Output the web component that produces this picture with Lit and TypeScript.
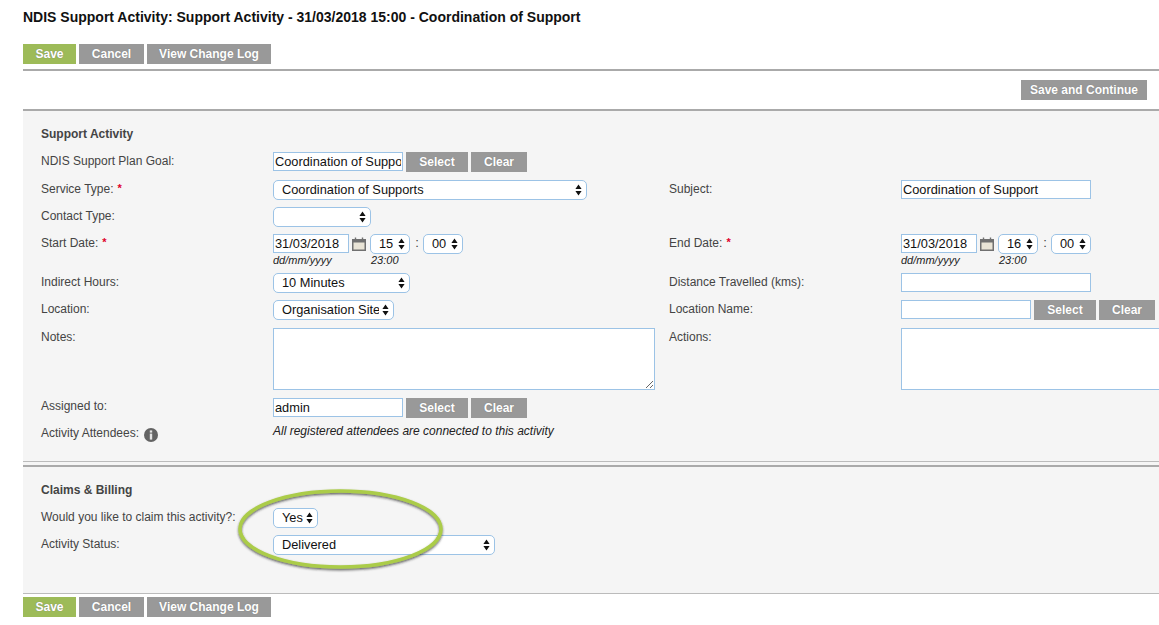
import { LitElement, html, css, svg } from "lit";
import { customElement } from "lit/decorators.js";

const FONT = css`"Liberation Sans", Arial, sans-serif`;

@customElement("app-root")
export class AppRoot extends LitElement {
  static styles = css`
    :host { display: block; width: 1159px; height: 625px; overflow: hidden; position: relative; background: #fff; font-family: ${FONT}; font-size: 12px; color: #444; }
    * { box-sizing: border-box; }
    .page { padding: 0 0 0 23px; }
    h1 { margin: 0; padding-top: 9px; height: 44px; font-size: 14px; line-height: 16px; font-weight: bold; color: #111; }
    .btns { display: flex; gap: 3px; height: 20px; }
    .btn { border: 0; margin: 0; padding: 0; height: 20px; background: #999; color: #fff; font: bold 12px/20px ${FONT}; text-shadow: 0 0 1px #777; display: block; }
    .btn.go { background: #9dbb58; }
    .w-save { width: 53px; } .w-cancel { width: 65px; } .w-log { width: 124px; } .w-select { width: 62px; } .w-clear { width: 56px; } .w-cont { width: 126px; }
    .top-rule { height: 2px; background: #aaa; margin-top: 5px; }
    .cont { display: flex; justify-content: flex-end; padding: 9px 12px 9px 0; }
    .panel { background: #f5f5f5; border-top: 2px solid #aaa; padding-left: 18px; }
    .p1 { height: 353px; border-bottom: 1px solid #bbb; }
    .gap { height: 3px; background: #f5f5f5; }
    .p2 { height: 129px; border-bottom: 1px solid #bbb; }
    h2 { margin: 0; padding-top: 15px; height: 41px; font-size: 12px; line-height: 16px; font-weight: bold; color: #444; }
    .form { display: grid; grid-template-columns: 232px 396px 232px 258px; }
    .f1 { grid-template-rows: 28px 27px 27px 39px 27px 28px 70px 26px 20px; }
    .f2 { grid-template-rows: 27px 27px; }
    .label { line-height: 16px; padding-top: 1px; white-space: nowrap; display: flex; gap: 4px; align-items: flex-start; }
    .label.tight { padding-top: 0; }
    .label.wide { gap: 5px; }
    .req { color: #e0002b; font-size: 11px; line-height: 14px; font-weight: bold; }
    .field { display: flex; align-items: flex-start; gap: 3px; }
    input, textarea { margin: 0; border: 1px solid #9cc3e6; border-radius: 0; background: #fff; color: #111; font: 12.8px/17px ${FONT}; padding: 0 1px; outline: none; display: block; }
    input { height: 19px; }
    textarea { height: 62px; resize: both; }
    .sel { position: relative; display: block; height: 20px; flex: none; }
    .sel select { appearance: none; -webkit-appearance: none; width: 100%; height: 20px; margin: 0; border: 1px solid #9cc3e6; border-radius: 5px; background: #fff; color: #111; font: 12.8px/18px ${FONT}; padding: 0 14px 0 8px; outline: none; display: block; }
    .sel svg { position: absolute; right: 5px; top: 4px; width: 7px; height: 12px; pointer-events: none; }
    .date { display: grid; grid-template-columns: 76px 21px 40px 13px 40px; grid-template-rows: 20px 13px; }
    .date input { width: 76px; }
    .cal { width: 14px; height: 14px; margin: 3px 0 0 3px; flex: none; }
    .colon { text-align: center; line-height: 18px; color: #444; font-size: 13px; padding-left: 1px; }
    .hint { font-style: italic; font-size: 11px; line-height: 13px; color: #222; white-space: nowrap; }
    .hint-d { grid-column: 1 / span 2; }
    .hint-t { grid-column: 3 / span 2; padding-left: 1px; }
    .note { font-style: italic; color: #222; line-height: 14px; white-space: nowrap; }
    .info { width: 14px; height: 14px; margin-top: 3px; flex: none; }
    .foot { padding-top: 3px; height: 23px; }
    .ring { position: absolute; left: 225px; top: 480px; width: 232px; height: 104px; pointer-events: none; overflow: visible; }
  `;

  private sel(w: number, value: string, options: string[] = [value]) {
    return html`<label class="sel" style="width:${w}px"><select aria-label=${value || "select"}>
      ${options.map((o) => html`<option ?selected=${o === value}>${o}</option>`)}
    </select><svg viewBox="0 0 7 12"><path d="M3.5 0.5 6.6 5H.4zM3.5 11.5 .4 7h6.2z" fill="#111"/></svg></label>`;
  }

  private cal() {
    return svg`<svg class="cal" viewBox="0 0 14 14"><rect x=".75" y="2.75" width="12.5" height="10.5" fill="#e9e4d6" stroke="#707070" stroke-width="1.5"/><rect x="1" y="3" width="12" height="2.5" fill="#707070"/><path d="M3.5 .5v3M10.5 .5v3" stroke="#707070" stroke-width="1.4"/></svg>`;
  }

  private dateRow(hour: string) {
    return html`<div class="date">
      <input value="31/03/2018" aria-label="date" />
      ${this.cal()}
      ${this.sel(40, hour)}
      <div class="colon">:</div>
      ${this.sel(40, "00")}
      <div class="hint hint-d">dd/mm/yyyy</div>
      <div class="hint hint-t">23:00</div>
    </div>`;
  }

  private actions() {
    return html`<button class="btn go w-save">Save</button><button class="btn w-cancel">Cancel</button><button class="btn w-log">View Change Log</button>`;
  }

  private pick() {
    return html`<button class="btn w-select">Select</button><button class="btn w-clear">Clear</button>`;
  }

  render() {
    return html`<div class="page">
      <h1>NDIS Support Activity: Support Activity - 31/03/2018 15:00 - Coordination of Support</h1>
      <div class="btns">${this.actions()}</div>
      <div class="top-rule"></div>
      <div class="cont"><button class="btn w-cont">Save and Continue</button></div>

      <section class="panel p1">
        <h2>Support Activity</h2>
        <div class="form f1">
          <div class="label">NDIS Support Plan Goal:</div>
          <div class="field"><input style="width:130px" value="Coordination of Supports" aria-label="goal" />${this.pick()}</div>
          <div></div><div></div>

          <div class="label">Service Type: <span class="req">*</span></div>
          <div class="field">${this.sel(314, "Coordination of Supports")}</div>
          <div class="label">Subject:</div>
          <div class="field"><input style="width:190px" value="Coordination of Support" aria-label="subject" /></div>

          <div class="label">Contact Type:</div>
          <div class="field">${this.sel(98, "")}</div>
          <div></div><div></div>

          <div class="label">Start Date: <span class="req">*</span></div>
          <div class="field">${this.dateRow("15")}</div>
          <div class="label">End Date: <span class="req">*</span></div>
          <div class="field">${this.dateRow("16")}</div>

          <div class="label">Indirect Hours:</div>
          <div class="field">${this.sel(137, "10 Minutes")}</div>
          <div class="label">Distance Travelled (kms):</div>
          <div class="field"><input style="width:190px" aria-label="distance" /></div>

          <div class="label">Location:</div>
          <div class="field">${this.sel(121, "Organisation Site")}</div>
          <div class="label">Location Name:</div>
          <div class="field"><input style="width:130px" aria-label="location name" />${this.pick()}</div>

          <div class="label">Notes:</div>
          <div class="field"><textarea style="width:382px" aria-label="notes"></textarea></div>
          <div class="label">Actions:</div>
          <div class="field"><textarea style="width:382px;flex:none" aria-label="actions"></textarea></div>

          <div class="label tight">Assigned to:</div>
          <div class="field"><input style="width:130px" value="admin" aria-label="assigned" />${this.pick()}</div>
          <div></div><div></div>

          <div class="label wide">Activity Attendees:
            <svg class="info" viewBox="0 0 14 14"><circle cx="7" cy="7" r="7" fill="#636363"/><rect x="5.8" y="2.4" width="2.4" height="2.2" fill="#e4e4e4"/><rect x="5.8" y="5.6" width="2.4" height="6" fill="#e4e4e4"/></svg>
          </div>
          <div class="note">All registered attendees are connected to this activity</div>
          <div></div><div></div>
        </div>
      </section>
      <div class="gap"></div>
      <section class="panel p2">
        <h2>Claims &amp; Billing</h2>
        <div class="form f2">
          <div class="label">Would you like to claim this activity?:</div>
          <div class="field">${this.sel(45, "Yes", ["Yes", "No"])}</div>
          <div></div><div></div>
          <div class="label">Activity Status:</div>
          <div class="field">${this.sel(222, "Delivered")}</div>
          <div></div><div></div>
        </div>
      </section>
      <div class="btns foot">${this.actions()}</div>
    </div>
    <svg class="ring" viewBox="0 0 232 104" aria-hidden="true">
      <defs><filter id="s" x="-10%" y="-20%" width="120%" height="150%"><feDropShadow dx="0" dy="1.5" stdDeviation="1" flood-color="#222" flood-opacity=".7"/></filter></defs>
      <ellipse cx="115.5" cy="49" rx="100.5" ry="38" fill="none" stroke="#abcc48" stroke-width="3.5" filter="url(#s)"/>
    </svg>`;
  }
}
